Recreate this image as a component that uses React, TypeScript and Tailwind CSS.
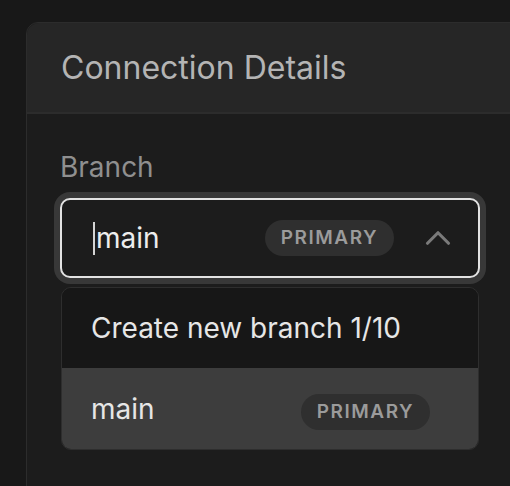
import { ChevronUp } from "lucide-react";

function Badge() {
  return (
    <span className="inline-flex items-center justify-center h-[36px] w-[129px] rounded-full bg-[#2f2f2f] text-[19px] font-semibold tracking-[0.08em] text-[#9b9b9b]">
      PRIMARY
    </span>
  );
}

export default function App() {
  return (
    <div
      className="w-[510px] h-[486px] overflow-hidden bg-[#181818] pt-[22px] pl-[26px]"
      style={{ fontFamily: "Inter, 'Noto Sans', sans-serif" }}
    >
      <div className="w-[520px] h-[500px] rounded-tl-[12px] border border-[#2c2c2c] bg-[#1c1c1c]">
        <div className="h-[91px] rounded-tl-[12px] border-b-2 border-[#2c2c2c] bg-[#262626] pl-[34px] flex items-center">
          <h2 className="text-[32px] text-[#b4b4b4]">Connection Details</h2>
        </div>

        <div className="pl-[33px] pt-[36px]">
          <div className="text-[28px] leading-[34px] text-[#8f8f8f]">Branch</div>

          <div className="mt-[14px] w-[420px] h-[80px] rounded-[10px] border-2 border-[#e2e2e2] shadow-[0_0_0_6px_#383838] bg-[#1c1c1c] flex items-center pl-[31px] pr-[19px]">
            <span className="w-[2px] h-[33px] bg-[#d4d4d4]" />
            <span className="ml-[1px] text-[28px] text-[#ededed]">main</span>
            <span className="ml-auto">
              <Badge />
            </span>
            <ChevronUp className="ml-[23px] w-[42px] h-[42px] text-[#7a7a7a]" strokeWidth={1.8} />
          </div>

          <div className="mt-[9px] ml-[1px] w-[418px] rounded-[10px] border border-[#2e2e2e] overflow-hidden">
            <div className="h-[80px] bg-[#171717] flex items-center pl-[29px] text-[28px] text-[#e6e6e6]">
              Create new branch 1/10
            </div>
            <div className="h-[81px] bg-[#3d3d3d] flex items-center pl-[29px] pr-[48px] text-[28px] text-[#e6e6e6]">
              <span>main</span>
              <span className="ml-auto">
                <Badge />
              </span>
            </div>
          </div>
        </div>
      </div>
    </div>
  );
}
